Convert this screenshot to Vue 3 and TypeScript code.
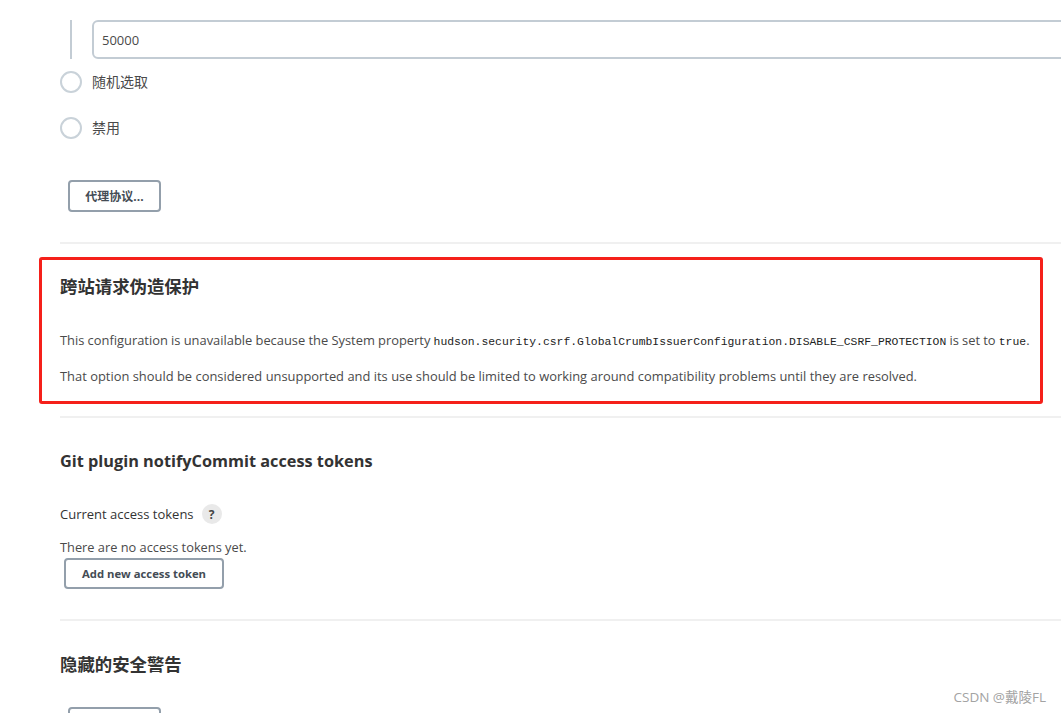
<script setup lang="ts">
const radios = ['随机选取', '禁用']
</script>

<template>
  <div class="page">
    <div class="nested">
      <div class="nested-bar"></div>
      <input class="text-input" value="50000" />
    </div>
    <div class="radios">
      <label v-for="r in radios" :key="r" class="radio">
        <span class="radio-dot"></span>
        <span class="radio-text">{{ r }}</span>
      </label>
    </div>
    <button class="btn btn-proxy">代理协议...</button>
    <hr class="divider first" />

    <section class="highlight">
      <h2 class="title">跨站请求伪造保护</h2>
      <p class="line first-line">
        This configuration is unavailable because the System property
        <code>hudson.security.csrf.GlobalCrumbIssuerConfiguration.DISABLE_CSRF_PROTECTION</code>
        is set to <code>true</code>.
      </p>
      <p class="line second-line">
        That option should be considered unsupported and its use should be limited to working around compatibility problems until they are resolved.
      </p>
    </section>
    <hr class="divider second" />

    <h2 class="title git-title">Git plugin notifyCommit access tokens</h2>
    <div class="token-label">
      <span>Current access tokens</span>
      <span class="help">?</span>
    </div>
    <p class="line no-tokens">There are no access tokens yet.</p>
    <button class="btn btn-token">Add new access token</button>
    <hr class="divider third" />

    <h2 class="title hidden-title">隐藏的安全警告</h2>
    <button class="btn btn-cut"></button>

    <div class="watermark">CSDN @戴陵FL</div>
  </div>
</template>

<style>
html, body {
  margin: 0;
  height: 713px;
  overflow: hidden;
  background: #fff;
}
</style>

<style scoped>
.page {
  position: relative;
  box-sizing: border-box;
  width: 1061px;
  height: 713px;
  overflow: hidden;
  padding: 20px 0 0 60px;
  font-family: "Open Sans", "Noto Sans CJK SC", sans-serif;
  font-size: 12.9px;
  color: #333;
}
.nested {
  display: flex;
  gap: 20px;
  padding-left: 10px;
  height: 39px;
}
.nested-bar {
  flex: none;
  width: 2px;
  background: #c3ccd4;
}
.text-input {
  flex: none;
  box-sizing: border-box;
  width: 1100px;
  height: 39px;
  padding: 0 8px;
  border: 2px solid #c3ccd4;
  border-radius: 6px;
  font: inherit;
  font-size: 13px;
  color: #4a4a4a;
  outline: none;
}
.radios {
  display: flex;
  flex-direction: column;
  gap: 24px;
  margin-top: 12px;
}
.radio {
  display: flex;
  align-items: center;
  gap: 10px;
  height: 22px;
  color: #4a4a4a;
}
.radio-dot {
  box-sizing: border-box;
  width: 22px;
  height: 22px;
  border: 2px solid #c9d2d9;
  border-radius: 50%;
}
.radio-text {
  font-size: 14px;
  padding-bottom: 3px;
}
.btn {
  display: block;
  box-sizing: border-box;
  border: 2px solid #939fab;
  border-radius: 4px;
  background: #fff;
  font-family: inherit;
  font-size: 11.3px;
  font-weight: 700;
  color: #444c55;
  padding: 0;
}
.btn-proxy {
  width: 93px;
  height: 32px;
  margin: 41px 0 0 8px;
  font-size: 12px;
}
.divider {
  height: 2px;
  border: 0;
  background: #f0f0f0;
  margin: 0;
}
.divider.first {
  margin-top: 30px;
}
.highlight {
  box-sizing: border-box;
  width: 1004px;
  height: 147px;
  margin: 13px 0 0 -21px;
  padding: 14px 0 0 18px;
  border: 3px solid #f5201a;
  border-radius: 3px;
}
.title {
  margin: 0;
  font-size: 17.4px;
  line-height: 24px;
  font-weight: 700;
  color: #333;
}
.line {
  margin: 0;
  line-height: 18px;
  color: #4a4a4a;
  white-space: nowrap;
}
.line code {
  font-family: "Liberation Mono", monospace;
  font-size: 11.4px;
  color: #222;
}
.first-line {
  margin-top: 33px;
  word-spacing: -0.15px;
}
.second-line {
  margin-top: 16px;
  word-spacing: 0.05px;
}
.divider.second {
  margin-top: 12px;
}
.git-title {
  margin-top: 31px;
  font-size: 16.3px;
}
.token-label {
  display: flex;
  align-items: center;
  gap: 8px;
  height: 20px;
  margin-top: 31px;
  font-size: 13px;
  font-weight: 500;
  color: #333;
}
.help {
  display: flex;
  align-items: center;
  justify-content: center;
  width: 20px;
  height: 20px;
  border-radius: 50%;
  background: #e9e9e9;
  font-size: 12px;
  font-weight: 700;
  color: #444;
}
.no-tokens {
  margin-top: 14px;
  font-size: 12.8px;
}
.btn-token {
  width: 160px;
  height: 31px;
  margin: 2px 0 0 4px;
}
.divider.third {
  margin-top: 30px;
}
.hidden-title {
  margin-top: 31px;
}
.btn-cut {
  width: 93px;
  height: 32px;
  margin: 31px 0 0 8px;
}
.watermark {
  position: absolute;
  right: 15px;
  top: 688px;
  font-size: 13.5px;
  line-height: 18px;
  color: #a3a3a3;
}
</style>
